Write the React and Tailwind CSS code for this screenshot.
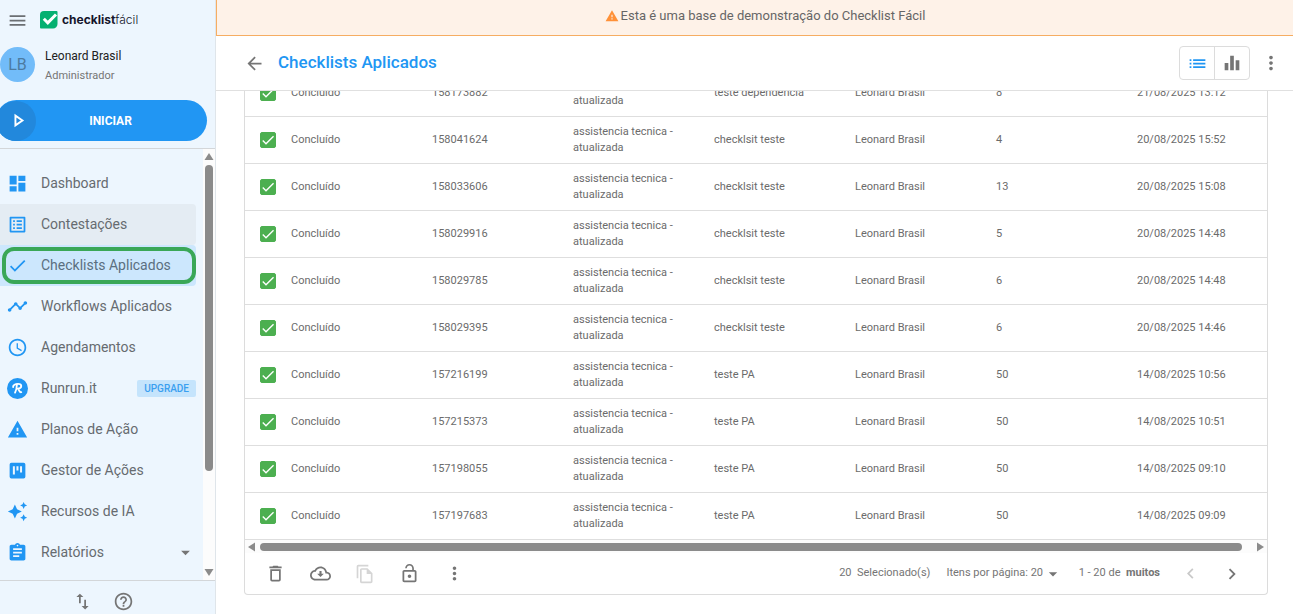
import React, { useState } from "react";
import {
  MdAccessTime,
  MdArrowBack,
  MdArrowDropDown,
  MdAssignment,
  MdAutoAwesome,
  MdCheck,
  MdChevronLeft,
  MdChevronRight,
  MdDashboard,
  MdEqualizer,
  MdHelpOutline,
  MdImportExport,
  MdList,
  MdListAlt,
  MdLockOpen,
  MdMenu,
  MdMoreVert,
  MdOutlineFileCopy,
  MdTimeline,
  MdWarning,
} from "react-icons/md";

const BoardIcon = ({ className }) => (
  <svg viewBox="0 0 24 24" fill="currentColor" className={className}>
    <path
      fillRule="evenodd"
      d="M5 3h14a2 2 0 0 1 2 2v14a2 2 0 0 1-2 2H5a2 2 0 0 1-2-2V5a2 2 0 0 1 2-2zm1.700 4v9.500H9V7H6.700zM10.800 7v5h2.300V7h-2.300zM14.900 7v7.200h2.300V7h-2.300z"
    />
  </svg>
);

const RunrunIcon = ({ className }) => (
  <svg viewBox="0 0 24 24" className={className}>
    <circle cx="12" cy="12" r="12" fill="currentColor" />
    <g fill="none" stroke="#fff" strokeWidth="2.100" strokeLinecap="round" strokeLinejoin="round">
      <path d="M7 10.300C6.800 8 9.500 6.800 12.500 6.800c2.600 0 3.800 1 3.800 2.400 0 1.900-2 2.900-4 2.900 1.500.6 1.300 4.700 4 4.100" />
      <path d="M11.300 7.500c0 3.500-.7 6.600-2.100 9.200" />
    </g>
  </svg>
);

const TrashIcon = ({ className }) => (
  <svg viewBox="0 0 24 24" fill="currentColor" className={className}>
    <path d="M19 4h-3.500l-1-1h-5l-1 1H5v2h14V4zM6 19a2 2 0 0 0 2 2h8a2 2 0 0 0 2-2V7H6v12zM8 9h8v10H8V9z" />
  </svg>
);

const CloudIcon = ({ className }) => (
  <svg viewBox="0 0 24 24" fill="currentColor" className={className}>
    <path d="M19.350 10.040C18.670 6.590 15.640 4 12 4 9.110 4 6.600 5.640 5.350 8.040 2.340 8.360 0 10.910 0 14c0 3.310 2.690 6 6 6h13c2.760 0 5-2.240 5-5 0-2.640-2.050-4.780-4.650-4.960zM19 18H6c-2.210 0-4-1.790-4-4 0-2.050 1.530-3.760 3.560-3.970l1.070-.11.5-.95C8.080 7.140 9.940 6 12 6c2.620 0 4.880 1.860 5.390 4.430l.3 1.500 1.530.11C20.780 12.140 22 13.450 22 15c0 1.650-1.350 3-3 3zM13.200 9.200h-2.400v3H8.200L12 16l3.800-3.800h-2.600v-3z" />
  </svg>
);

const Logo = () => (
  <div className="flex items-center gap-1">
    <svg viewBox="0 0 18 18" className="size-[18px]">
      <path d="M4 0h12.500a1 1 0 0 1 1 1v12a4.500 4.500 0 0 1-4.500 4.500H1a1 1 0 0 1-1-1V4a4 4 0 0 1 4-4z" fill="#05b071" />
      <path d="M3.800 7.800 7.800 11.800 16 3.500" fill="none" stroke="#fff" strokeWidth="3" />
    </svg>
    <span className="font-['Inter',sans-serif] text-[12px] text-[#15152b]">
      <b className="font-bold">checklist</b>
      <span className="font-light">fácil</span>
    </span>
  </div>
);

const menu = [
  { label: "Dashboard", icon: MdDashboard },
  { label: "Contestações", icon: MdListAlt, hover: true },
  { label: "Checklists Aplicados", icon: MdCheck, active: true },
  { label: "Workflows Aplicados", icon: MdTimeline },
  { label: "Agendamentos", icon: MdAccessTime },
  { label: "Runrun.it", icon: RunrunIcon, badge: "UPGRADE" },
  { label: "Planos de Ação", icon: MdWarning },
  { label: "Gestor de Ações", icon: BoardIcon },
  { label: "Recursos de IA", icon: MdAutoAwesome },
  { label: "Relatórios", icon: MdAssignment, expandable: true },
];

const rows = [
  ["158173882", "teste dependencia", "8", "21/08/2025 13:12"],
  ["158041624", "checklsit teste", "4", "20/08/2025 15:52"],
  ["158033606", "checklsit teste", "13", "20/08/2025 15:08"],
  ["158029916", "checklsit teste", "5", "20/08/2025 14:48"],
  ["158029785", "checklsit teste", "6", "20/08/2025 14:48"],
  ["158029395", "checklsit teste", "6", "20/08/2025 14:46"],
  ["157216199", "teste PA", "50", "14/08/2025 10:56"],
  ["157215373", "teste PA", "50", "14/08/2025 10:51"],
  ["157198055", "teste PA", "50", "14/08/2025 09:10"],
  ["157197683", "teste PA", "50", "14/08/2025 09:09"],
];

const MenuItem = ({ item }) => {
  const Icon = item.icon;
  let bg = "";
  if (item.hover) bg = "bg-[#e4ecf3]";
  if (item.active) bg = "bg-[#cce7fd]";

  return (
    <li>
      <a
        href="#"
        aria-current={item.active ? "page" : undefined}
        className={`relative flex h-[41px] items-center rounded-r pl-[7px] ${bg}`}
      >
        <Icon className="size-[21px] shrink-0 text-[#2196f3]" />
        <span className={`ml-[13px] text-[14px] ${item.active ? "text-[#5b6f80]" : "text-[#666b70]"}`}>
          {item.label}
        </span>
        {item.badge && (
          <span className="ml-auto rounded-xs bg-[#c5e4fc] px-[7px] text-[10px] leading-[17px] font-medium text-[#3a9ff0]">
            {item.badge}
          </span>
        )}
        {item.expandable && <MdArrowDropDown className="ml-auto size-[21px] text-[#757575]" />}
        {item.active && (
          <span className="absolute inset-y-0.5 right-0 left-0.5 rounded-xl border-4 border-[#3aa757]" />
        )}
      </a>
    </li>
  );
};

const Sidebar = () => (
  <aside className="flex w-[216px] shrink-0 flex-col border-r border-[#dfe5ea] bg-[#edf6fe]">
    <div className="flex h-10 items-center gap-3 pl-[7px]">
      <button type="button" aria-label="Menu">
        <MdMenu className="size-[21px] text-[#6b6f73]" />
      </button>
      <Logo />
    </div>

    <div className="mt-1.5 flex items-start gap-2.5">
      <div className="mt-px flex size-[35px] items-center justify-center rounded-full bg-[#72bcf9] text-[16px] text-[#4c7ba1]">
        LB
      </div>
      <div>
        <p className="text-[12px] leading-5 text-[#212121]">Leonard Brasil</p>
        <p className="text-[11px] leading-5 text-[#757575]">Administrador</p>
      </div>
    </div>

    <button
      type="button"
      className="mt-3.5 mr-2 -ml-1 flex h-[41px] shrink-0 items-center rounded-full bg-[#2196f3] text-[12px] font-bold text-white"
    >
      <span className="flex size-10 items-center justify-center rounded-full bg-[#2288dc] pl-1">
        <svg viewBox="0 0 24 24" className="size-[21px]" fill="none" stroke="currentColor" strokeWidth="2.200">
          <path d="M8.500 6.500v11l8-5.500z" />
        </svg>
      </span>
      <span className="flex-1 pr-[22px]">INICIAR</span>
    </button>

    <div className="mt-[7px] flex min-h-0 flex-1 border-y border-[#d3d6d9]">
      <nav className="min-w-0 flex-1 overflow-hidden pt-3.5 pr-[7px]">
        <ul>
          {menu.map((item) => (
            <MenuItem key={item.label} item={item} />
          ))}
        </ul>
      </nav>
      {/* Scrollbar */}
      <div className="flex w-3 flex-col items-center bg-[#fcfcfc] py-1">
        <svg viewBox="0 0 10 8" className="h-2 w-2.5" fill="#8b8b8b">
          <path d="M5 0l4.500 7h-9z" />
        </svg>
        <div className="mt-1 flex w-2 flex-1 flex-col">
          <div className="h-[76%] rounded-full bg-[#8b8b8b]" />
        </div>
        <svg viewBox="0 0 10 8" className="h-2 w-2.5" fill="#8b8b8b">
          <path d="M5 8L.5 1h9z" />
        </svg>
      </div>
    </div>

    <div className="flex h-[33px] items-end justify-center gap-5 pr-2.5 pb-0.5 text-[#757575]">
      <button type="button" aria-label="Sincronizar">
        <MdImportExport className="size-[21px]" />
      </button>
      <button type="button" aria-label="Ajuda">
        <MdHelpOutline className="size-[21px]" />
      </button>
    </div>
  </aside>
);

const Header = () => (
  <header className="flex h-[55px] shrink-0 items-center border-b border-[#e0e0e0] bg-white pr-[11px] pl-7">
    <button type="button" aria-label="Voltar">
      <MdArrowBack className="size-[21px] text-[#757575]" />
    </button>
    <h1 className="ml-[13px] text-[17px] font-medium text-[#2196f3]">Checklists Aplicados</h1>
    <div className="ml-auto flex h-[34px] divide-x divide-[#dcdcdc] rounded border border-[#dcdcdc]">
      <button type="button" aria-label="Lista" className="flex w-[35px] items-center justify-center">
        <MdList className="size-[21px] text-[#2196f3]" />
      </button>
      <button type="button" aria-label="Gráficos" className="flex w-[34px] items-center justify-center">
        <MdEqualizer className="size-[22px] text-[#757575]" />
      </button>
    </div>
    <button type="button" aria-label="Mais opções" className="ml-2.5">
      <MdMoreVert className="size-[22px] text-[#757575]" />
    </button>
  </header>
);

const Row = ({ row }) => {
  const [id, unit, score, date] = row;
  const [checked, setChecked] = useState(true);

  return (
    <tr className="h-[47px] border-b border-[#dedede]">
      <td className="pl-[15px]">
        <label className="grid size-4 place-items-center">
          <input
            type="checkbox"
            aria-label={`Selecionar ${id}`}
            checked={checked}
            onChange={() => setChecked(!checked)}
            className="col-start-1 row-start-1 size-4 appearance-none rounded-xs border border-[#4caf50] checked:bg-[#4caf50]"
          />
          <MdCheck className="pointer-events-none z-10 col-start-1 row-start-1 size-4 text-white" />
        </label>
      </td>
      <td>Concluído</td>
      <td>{id}</td>
      <td className="pr-8 leading-4">assistencia tecnica - atualizada</td>
      <td>{unit}</td>
      <td>Leonard Brasil</td>
      <td>{score}</td>
      <td>{date}</td>
    </tr>
  );
};

const TableFooter = () => (
  <div className="flex h-[41px] items-center pr-6 pl-5 text-[11px] text-[#757575]">
    <div className="flex items-center gap-6">
      <button type="button" aria-label="Excluir">
        <TrashIcon className="size-[21px]" />
      </button>
      <button type="button" aria-label="Baixar">
        <CloudIcon className="size-[21px]" />
      </button>
      <button type="button" aria-label="Duplicar" disabled className="text-[#d5d5d5]">
        <MdOutlineFileCopy className="size-5" />
      </button>
      <button type="button" aria-label="Desbloquear">
        <MdLockOpen className="size-[21px]" />
      </button>
      <button type="button" aria-label="Mais ações">
        <MdMoreVert className="size-[21px]" />
      </button>
    </div>
    <span className="ml-auto">20&nbsp; Selecionado(s)</span>
    <label htmlFor="page-size" className="ml-4">
      Itens por página:&nbsp;
    </label>
    <select id="page-size" defaultValue="20" className="w-3.5 appearance-none">
      <option>20</option>
      <option>50</option>
    </select>
    <MdArrowDropDown className="pointer-events-none -ml-0.5 size-5" />
    <span className="ml-4">
      1 - 20 de &nbsp;<b className="font-bold">muitos</b>
    </span>
    <button type="button" aria-label="Página anterior" disabled className="ml-5 text-[#c9c9c9]">
      <MdChevronLeft className="size-[21px]" />
    </button>
    <button type="button" aria-label="Próxima página" className="ml-5">
      <MdChevronRight className="size-[22px]" />
    </button>
  </div>
);

export default function App() {
  return (
    <div className="flex h-screen overflow-hidden bg-white font-['Roboto',sans-serif]">
      <Sidebar />
      <main className="flex min-w-0 flex-1 flex-col">
        <div className="flex h-9 shrink-0 items-center justify-center gap-0.5 border-b border-l border-[#f6ad62] bg-[#fef2e8] pb-1 pl-5 text-[13px] text-[#666]">
          <MdWarning className="size-3.5 text-[#ff9138]" />
          Esta é uma base de demonstração do Checklist Fácil
        </div>
        <Header />

        <section className="mr-[25px] mb-[19px] ml-7 flex min-h-0 flex-1 flex-col rounded-b border border-t-0 border-[#dcdcdc]">
          {/* Rows are scrolled to the end of the list */}
          <div className="flex min-h-0 flex-1 flex-col justify-end overflow-hidden">
            <table className="w-full table-fixed text-left text-[11px] text-[#6b6b6b]">
              <colgroup>
                <col className="w-[46px]" />
                <col className="w-[141px]" />
                <col className="w-[141px]" />
                <col className="w-[141px]" />
                <col className="w-[141px]" />
                <col className="w-[141px]" />
                <col className="w-[141px]" />
                <col />
              </colgroup>
              <tbody>
                {rows.map((row) => (
                  <Row key={row[0]} row={row} />
                ))}
              </tbody>
            </table>
          </div>
          <div className="flex h-[13px] shrink-0 items-center gap-1 bg-[#fcfcfc] px-[3px]">
            <svg viewBox="0 0 8 10" className="h-2.5 w-2" fill="#8b8b8b">
              <path d="M0 5l7-4.500v9z" />
            </svg>
            <div className="mr-2.5 h-2 flex-1 rounded-full bg-[#8b8b8b]" />
            <svg viewBox="0 0 8 10" className="h-2.5 w-2" fill="#8b8b8b">
              <path d="M8 5L1 .5v9z" />
            </svg>
          </div>
          <TableFooter />
        </section>
      </main>
    </div>
  );
}
